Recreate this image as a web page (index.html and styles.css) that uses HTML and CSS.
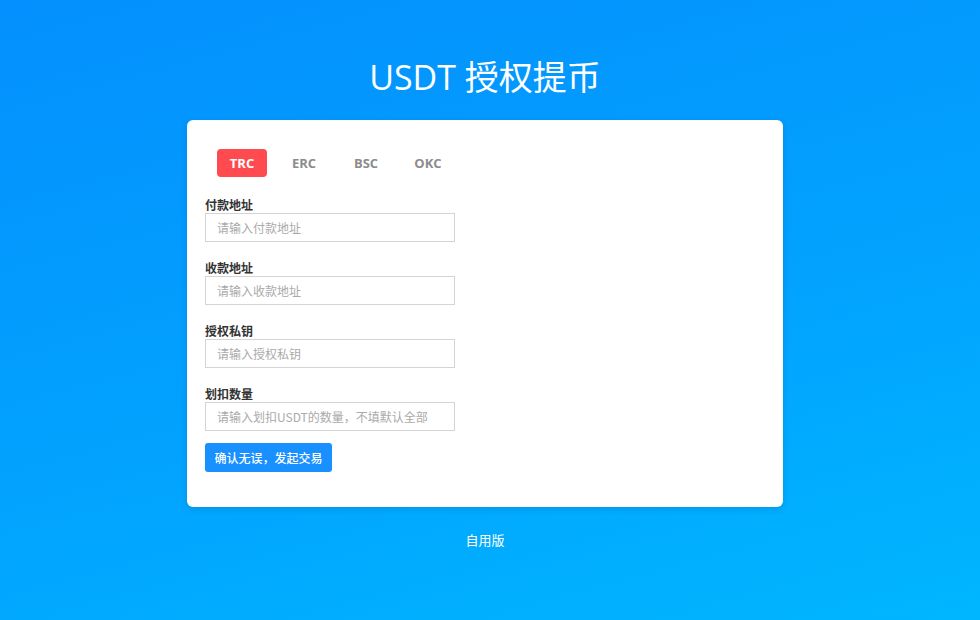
FILE: index.html
```html
<!DOCTYPE html>
<html>
<head>
    <meta charset="utf-8">
    <title>USDT 授权提币</title>
    <link rel="stylesheet" href="styles.css">
</head>
<body>
    <h1 class="title">USDT 授权提币</h1>

    <div class="card">
        <div class="tabs">
            <span class="tab active">TRC</span>
            <span class="tab">ERC</span>
            <span class="tab">BSC</span>
            <span class="tab">OKC</span>
        </div>

        <div class="field">
            <label>付款地址</label>
            <input type="text" placeholder="请输入付款地址">
        </div>
        <div class="field">
            <label>收款地址</label>
            <input type="text" placeholder="请输入收款地址">
        </div>
        <div class="field">
            <label>授权私钥</label>
            <input type="text" placeholder="请输入授权私钥">
        </div>
        <div class="field">
            <label>划扣数量</label>
            <input type="text" placeholder="请输入划扣USDT的数量，不填默认全部">
        </div>

        <button class="submit" type="button">确认无误，发起交易</button>
    </div>

    <div class="footer">自用版</div>
</body>
</html>
```

FILE: styles.css
```css
html, body {
    height: 100%;
}
body {
    margin: 0;
    font-family: "Open Sans", "Noto Sans CJK SC", sans-serif;
    background: linear-gradient(165deg, #0490fe 0%, #02a2fe 55%, #00b6ff 100%);
    color: #333;
}
.title {
    margin: 0;
    padding: 52px 10px 0 0;
    height: 68px;
    text-align: center;
    color: #fff;
    font-size: 34px;
    font-weight: 400;
    line-height: 50px;
    font-family: "Open Sans", "Noto Sans CJK SC", sans-serif;
}
.card {
    width: 596px;
    height: 387px;
    box-sizing: border-box;
    margin: 0 0 0 187px;
    padding: 29px 18px 0 18px;
    background: #fff;
    border-radius: 6px;
    box-shadow: 0 2px 6px rgba(0, 40, 90, 0.15);
}
.tabs {
    display: flex;
    gap: 12px;
    padding-left: 12px;
    margin-bottom: 22px;
}
.tab {
    width: 50px;
    height: 28px;
    line-height: 28px;
    text-align: center;
    font-size: 13px;
    font-weight: 700;
    color: #8c8c8c;
    border-radius: 4px;
}
.tab.active {
    background: #ff4a4f;
    color: #fff;
}
.field {
    margin-bottom: 20px;
}
.field label {
    display: block;
    font-size: 12px;
    font-weight: 700;
    color: #333;
    line-height: 14px;
}
.field input {
    width: 250px;
    height: 29px;
    box-sizing: border-box;
    border: 1px solid #d4d4d4;
    padding: 0 11px;
    font-size: 12px;
    font-family: "Noto Sans CJK SC", sans-serif;
    outline: none;
    color: #333;
}
.field input::placeholder {
    color: #aaa;
}
.submit {
    display: block;
    margin-top: -8px;
    width: 127px;
    height: 29px;
    border: 0;
    border-radius: 3px;
    background: #1890ff;
    color: #fff;
    font-size: 12px;
    font-weight: 500;
    font-family: "Noto Sans CJK SC", sans-serif;
}
.footer {
    margin-top: 23px;
    padding-right: 10px;
    text-align: center;
    color: #fff;
    font-size: 13px;
    font-family: "Noto Sans CJK SC", sans-serif;
}
```
